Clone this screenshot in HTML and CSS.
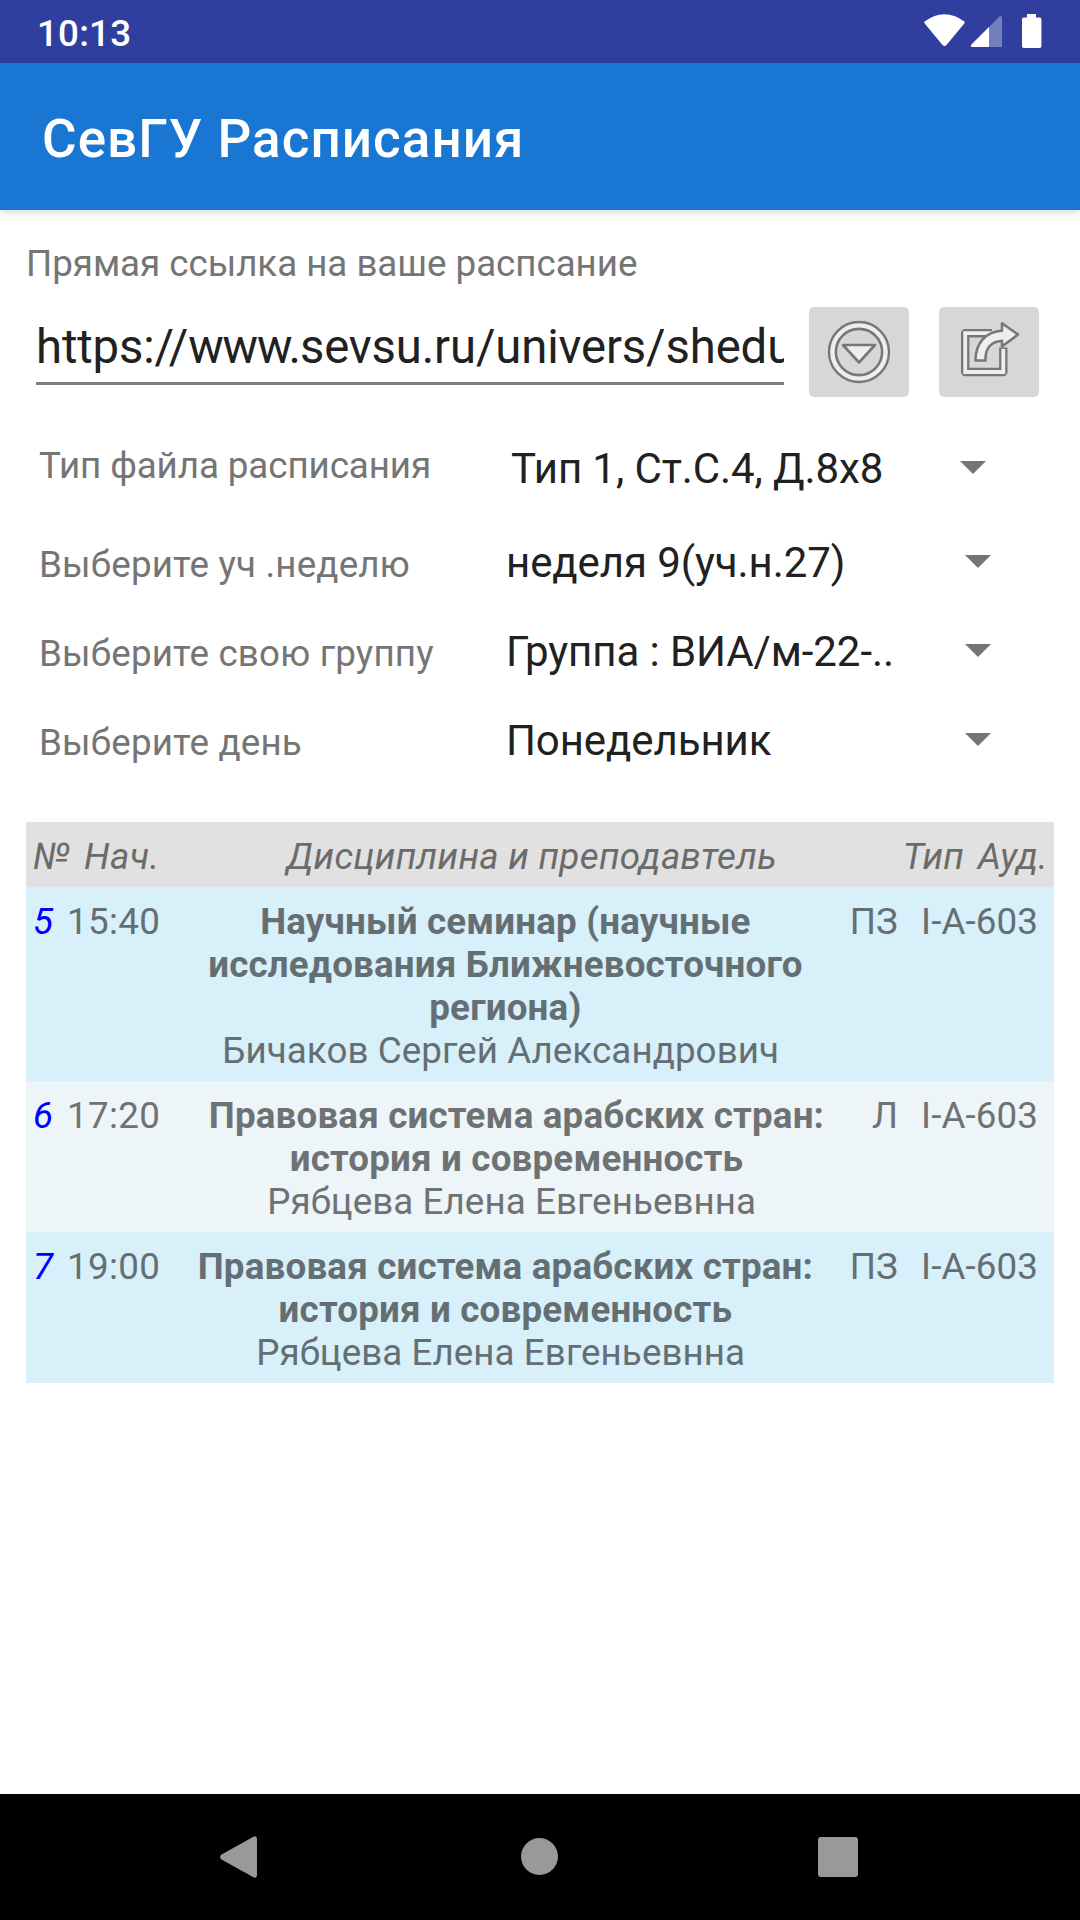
FILE: index.html
```html
<!DOCTYPE html>
<html lang="ru">
<head>
<meta charset="utf-8">
<title>СевГУ Расписания</title>
<link rel="stylesheet" href="styles.css">
</head>
<body>
<div class="screen">
  <header class="status">
    <span class="clock">10:13</span>
    <svg class="status-icons" width="120" height="63" viewBox="0 0 120 63">
      <path d="M4.6 21.5Q24.5 7 44.4 21.5Q45 22.5 44.3 23.5L26.500 45Q24.500 46.800 22.500 45L4.700 23.500Q4 22.500 4.600 21.500Z" fill="#fff"/>
      <path d="M51.500 44.500L79.500 16.600Q82 15 82 18V47H52Q50 46.500 51.500 44.500Z" fill="#fff" fill-opacity=".33"/>
      <path d="M51.500 44.500L69 27V47H52Q50 46.500 51.500 44.500Z" fill="#fff"/>
      <path d="M107 14h9v3.500h3.700q1.700 0 1.700 1.700v27q0 1.700-1.700 1.700h-16q-1.700 0-1.700-1.700v-27q0-1.700 1.700-1.700h3.300z" fill="#fff"/>
    </svg>
  </header>
  <div class="appbar"><h1>СевГУ Расписания</h1></div>
  <main>
    <p class="hint">Прямая ссылка на ваше распсание</p>
    <div class="link-row">
      <div class="field">https://<span class="host">www.</span>sevsu.ru/univers/shedule</div>
      <button class="tool" type="button">
        <svg width="100" height="90" viewBox="0 0 100 90">
          <circle cx="50" cy="45" r="26.500" fill="none" stroke="#777" stroke-width="9.400"/>
          <circle cx="50" cy="45" r="26.600" fill="none" stroke="#eee" stroke-width="4.400"/>
          <path d="M34 38H66L50 55.500Z" fill="#eee" stroke="#777" stroke-width="2.600" stroke-linejoin="round"/>
        </svg>
      </button>
      <button class="tool" type="button">
        <svg width="100" height="90" viewBox="0 0 100 90">
          <path d="M53 26.200H26.200V65H64.300V40.500" fill="none" stroke="#777" stroke-width="8.400" stroke-linejoin="round"/>
          <path d="M53 26.200H26.200V65H64.300V42" fill="none" stroke="#eee" stroke-width="3.800"/>
          <path d="M36.500 53.500C36.500 37 46 24.500 63 23.700V16.300L79 27.500L63 39.500V33.700C52 34.500 46 41.500 46.500 53.500Z" fill="#eee" stroke="#777" stroke-width="2.600" stroke-linejoin="round"/>
        </svg>
      </button>
    </div>
    <div class="pick first">
      <span class="label">Тип файла расписания</span>
      <span class="value">Тип 1, Ст.С.4, Д.8x8</span>
      <i class="caret"></i>
    </div>
    <div class="pick">
      <span class="label">Выберите уч .неделю</span>
      <span class="value">неделя 9(уч.н.27)</span>
      <i class="caret"></i>
    </div>
    <div class="pick">
      <span class="label">Выберите свою группу</span>
      <span class="value">Группа : ВИА/м-22-..</span>
      <i class="caret"></i>
    </div>
    <div class="pick">
      <span class="label">Выберите день</span>
      <span class="value">Понедельник</span>
      <i class="caret"></i>
    </div>
    <section class="table">
      <div class="row head">
        <span class="num">№</span><span class="time">Нач.</span>
        <span class="subject">Дисциплина и преподавтель</span>
        <span class="type">Тип</span><span class="room">Ауд.</span>
      </div>
      <div class="row blue">
        <span class="num">5</span><span class="time">15:40</span>
        <div class="subject"><b>Научный семинар (научные<br>исследования Ближневосточного<br>региона)</b><span class="teacher">Бичаков Сергей Александрович</span></div>
        <span class="type">ПЗ</span><span class="room">I-А-603</span>
      </div>
      <div class="row pale">
        <span class="num">6</span><span class="time">17:20</span>
        <div class="subject"><b>Правовая система арабских стран:<br>история и современность</b><span class="teacher">Рябцева Елена Евгеньевнна</span></div>
        <span class="type">Л</span><span class="room">I-А-603</span>
      </div>
      <div class="row blue">
        <span class="num">7</span><span class="time">19:00</span>
        <div class="subject"><b>Правовая система арабских стран:<br>история и современность</b><span class="teacher">Рябцева Елена Евгеньевнна</span></div>
        <span class="type">ПЗ</span><span class="room">I-А-603</span>
      </div>
    </section>
  </main>
  <nav class="navbar">
    <svg width="1080" height="126" viewBox="0 0 1080 126" fill="#999">
      <path d="M221.500 60.500L253 43Q257 41 257 45V81Q257 85 253 83L221.500 65.500Q218.500 63 221.500 60.500Z"/>
      <circle cx="539.500" cy="62.500" r="18.500"/>
      <rect x="818" y="43" width="40" height="40" rx="3"/>
    </svg>
  </nav>
</div>
</body>
</html>
```
FILE: styles.css
```css
* { box-sizing: border-box; }
body {
  margin: 0;
  background: #fff;
  font-family: Roboto, sans-serif;
  font-size: 36.75px;
  line-height: 43px;
  color: #757575;
}
.screen {
  display: flex;
  flex-direction: column;
  width: 1080px;
  height: 1920px;
  overflow: hidden;
}
.status {
  display: flex;
  justify-content: space-between;
  height: 63px;
  padding: 12px 40px 0 37px;
  background: #303f9f;
  color: #fff;
}
.clock { font-weight: 500; letter-spacing: 0.2px; }
.status-icons { margin-top: -12px; overflow: visible; }
.appbar {
  height: 147px;
  padding: 45px 42px 0;
  background: #1976d2;
  color: #fff;
  box-shadow: 0 2px 8px rgba(0, 0, 0, 0.16);
}
h1 {
  margin: 0;
  font-size: 53px;
  font-weight: 500;
  line-height: 62px;
  letter-spacing: 1.05px;
}
main { flex: 1; padding: 32px 26px 0; white-space: nowrap; }
.hint { margin: 0; letter-spacing: -0.04px; }
.link-row { display: flex; margin-top: 22px; padding-left: 10px; }
.field {
  width: 748px;
  height: 78px;
  padding-top: 12px;
  border-bottom: 3px solid #7d7d7d;
  overflow: hidden;
  font-size: 47.25px;
  line-height: 56px;
  letter-spacing: -0.12px;
  color: #212121;
}
.host { letter-spacing: -1.1px; }
.tool {
  width: 100px;
  height: 90px;
  margin-left: 25px;
  padding: 0;
  border: 0;
  border-radius: 5px;
  background: #d6d7d7;
}
.tool + .tool { margin-left: 30px; }
.tool svg { display: block; }
.pick {
  display: flex;
  height: 89px;
  padding-left: 13px;
}
.label { width: 467px; padding-top: 5px; letter-spacing: 0.17px; }
.value { width: 459px; font-size: 42px; line-height: 49px; letter-spacing: -0.09px; color: #212121; }
.caret {
  height: 13px;
  margin-top: 17px;
  border: 13px solid transparent;
  border-top-color: #757575;
  border-bottom: 0;
}
.pick.first { height: 94px; margin-top: 47px; }
.first .label { width: 472px; padding-top: 0; letter-spacing: -0.09px; }
.first .value { width: 449px; }
.table { margin-top: 17px; }
.row {
  display: flex;
  padding: 13px 16px 9px 7px;
  letter-spacing: 0.1px;
}
.blue { background: #d7f0fa; color: #656f73; }
.pale { background: #edf5f9; color: #6f7273; }
.num { width: 34px; font-style: italic; }
.time { width: 98px; letter-spacing: 0.35px; }
.subject { flex: 1; padding-right: 4px; text-align: center; }
.subject b { display: block; font-weight: 700; letter-spacing: 0.17px; }
.teacher { display: block; padding-right: 9.5px; letter-spacing: 0.07px; }
.row:not(.head) .num { color: #00f; }
.type { margin-right: 23px; }
.head {
  padding-right: 6px;
  background: #e1e1e1;
  font-style: italic;
  letter-spacing: 0.3px;
  color: #6b6b6b;
}
.head .num { width: 51px; }
.head .time { letter-spacing: 0.5px; }
.head .subject { padding-right: 21.5px; }
.head .type { margin-right: 13.5px; }
.navbar { height: 126px; background: #000; }
.navbar svg { display: block; }
```
